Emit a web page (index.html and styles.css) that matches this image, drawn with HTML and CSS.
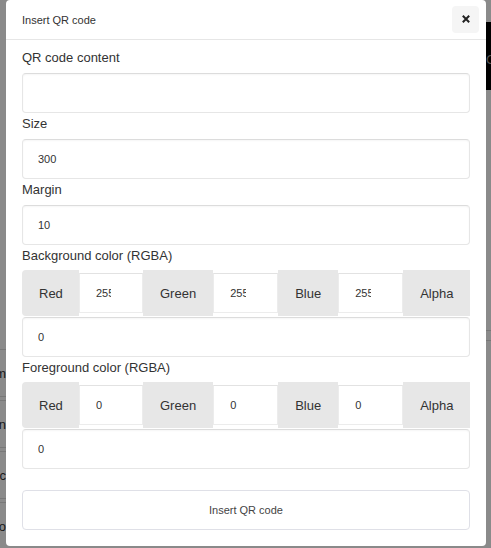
FILE: index.html
```html
<!DOCTYPE html>
<html lang="en">
<head>
<meta charset="utf-8">
<title>Insert QR code</title>
<link rel="stylesheet" href="styles.css">
</head>
<body>
  <div class="page">
    <ul class="side-list">
      <li class="side-item"><span>Item</span></li>
      <li class="side-item"><span>Design</span></li>
      <li class="side-item"><span>Replac</span></li>
      <li class="side-item"><span>Barco</span></li>
    </ul>
    <div class="page-main"></div>
    <div class="page-edge">
      <div class="edge-bar"><span>Co</span></div>
      <div class="edge-rule"></div>
    </div>
  </div>

  <div class="backdrop"></div>

  <div class="modal" role="dialog" aria-labelledby="qr-title">
    <div class="modal-header">
      <span class="modal-title" id="qr-title">Insert QR code</span>
      <button class="close-btn" type="button" aria-label="Close">
        <svg width="8" height="8" viewBox="0 0 8 8" aria-hidden="true">
          <path d="M0.8 0.8 L7.2 7.2 M7.2 0.8 L0.8 7.2" stroke="#222" stroke-width="2" stroke-linecap="butt"/>
        </svg>
      </button>
    </div>

    <div class="modal-body">
      <label class="field-label" for="qr-content">QR code content</label>
      <input class="text-input" id="qr-content" type="text" value="">

      <label class="field-label" for="qr-size">Size</label>
      <input class="text-input" id="qr-size" type="text" value="300">

      <label class="field-label" for="qr-margin">Margin</label>
      <input class="text-input" id="qr-margin" type="text" value="10">

      <label class="field-label">Background color (RGBA)</label>
      <div class="rgba">
        <div class="rgba-row">
          <span class="addon addon-first">Red</span>
          <input class="channel channel-a" type="text" value="255">
          <span class="addon">Green</span>
          <input class="channel channel-b" type="text" value="255">
          <span class="addon">Blue</span>
          <input class="channel channel-b" type="text" value="255">
          <span class="addon">Alpha</span>
        </div>
        <input class="text-input alpha-input" type="text" value="0">
      </div>

      <label class="field-label">Foreground color (RGBA)</label>
      <div class="rgba">
        <div class="rgba-row">
          <span class="addon addon-first">Red</span>
          <input class="channel channel-a" type="text" value="0">
          <span class="addon">Green</span>
          <input class="channel channel-b" type="text" value="0">
          <span class="addon">Blue</span>
          <input class="channel channel-b" type="text" value="0">
          <span class="addon">Alpha</span>
        </div>
        <input class="text-input alpha-input" type="text" value="0">
      </div>

      <button class="insert-btn" type="button">Insert QR code</button>
    </div>
  </div>
</body>
</html>
```
FILE: styles.css
```css
* {
  box-sizing: border-box;
}

html,
body {
  margin: 0;
  height: 100%;
  overflow: hidden;
}

body {
  background: #fff;
  font-family: "Liberation Sans", Arial, sans-serif;
  color: #333;
}

/* page underneath the dialog */
.page {
  display: flex;
  height: 100%;
}

.side-list {
  list-style: none;
  margin: 0;
  padding: 349px 0 0;
  width: 6px;
  overflow: hidden;
  flex: none;
}

.side-item {
  display: flex;
  justify-content: flex-end;
  align-items: center;
  height: 48px;
  margin-bottom: 3px;
  border-top: 1px solid #dedede;
  border-bottom: 1px solid #dedede;
  font-size: 13px;
  color: #333;
  white-space: nowrap;
}

.page-main {
  flex: 1;
}

.page-edge {
  width: 5px;
  flex: none;
  overflow: hidden;
  padding-top: 22px;
}

.edge-bar {
  height: 68px;
  background: #000;
  display: flex;
  align-items: center;
  padding-top: 6px;
  font-size: 13px;
  color: #999;
  white-space: nowrap;
}

.edge-rule {
  margin-top: 240px;
  height: 11px;
  border-top: 1px solid #ddd;
  border-bottom: 1px solid #ddd;
}

.backdrop {
  position: fixed;
  inset: 0;
  background: rgba(0, 0, 0, 0.46);
}

/* dialog */
.modal {
  position: absolute;
  top: 0;
  left: 6px;
  width: 480px;
  background: #fff;
  border-radius: 4px;
}

.modal-header {
  display: flex;
  align-items: center;
  justify-content: space-between;
  height: 40px;
  padding: 0 7px 0 16px;
  border-bottom: 1px solid #e6e6e6;
}

.modal-title {
  font-size: 11px;
  color: #333;
}

.close-btn {
  width: 27px;
  height: 27px;
  padding: 0;
  margin-top: -1px;
  border: 0;
  border-radius: 4px;
  background: #f5f5f5;
  display: flex;
  align-items: center;
  justify-content: center;
}

.modal-body {
  padding: 7px 16px 16px;
}

.field-label {
  display: block;
  padding-top: 2px;
  margin-bottom: 6px;
  font-size: 13px;
  line-height: 18px;
  color: #333;
}

.text-input {
  display: block;
  width: 100%;
  height: 40px;
  margin: 0;
  padding: 0 15px;
  border: 1px solid #e6e6e6;
  border-top-color: #dcdcdc;
  border-radius: 4px;
  box-shadow: inset 0 1px 2px rgba(0, 0, 0, 0.04);
  background: #fff;
  font-family: inherit;
  font-size: 11px;
  color: #333;
  outline: none;
}

.rgba {
  margin-top: -1px;
}

.rgba-row {
  display: flex;
  height: 46px;
  width: 100%;
}

.addon {
  flex: none;
  display: flex;
  align-items: center;
  padding: 0 17px;
  background: #e7e7e7;
  font-size: 13px;
  color: #333;
  white-space: nowrap;
}

.addon-first {
  width: 57px;
  border-radius: 4px 0 0 4px;
}

.channel {
  flex: none;
  align-self: center;
  height: 40px;
  margin: 0;
  padding: 0 31px 0 16px;
  border: 1px solid #ececec;
  border-top-color: #e2e2e2;
  border-radius: 0;
  background: #fff;
  font-family: inherit;
  font-size: 11px;
  color: #333;
  outline: none;
}

.channel-a {
  width: 64px;
}

.channel-b {
  width: 65px;
}

.alpha-input {
  margin-top: 1px;
}

.insert-btn {
  display: block;
  width: 100%;
  height: 40px;
  margin-top: 21px;
  border: 1px solid #dfe0e7;
  border-radius: 4px;
  background: #fff;
  font-family: inherit;
  font-size: 11px;
  color: #444;
}
```
